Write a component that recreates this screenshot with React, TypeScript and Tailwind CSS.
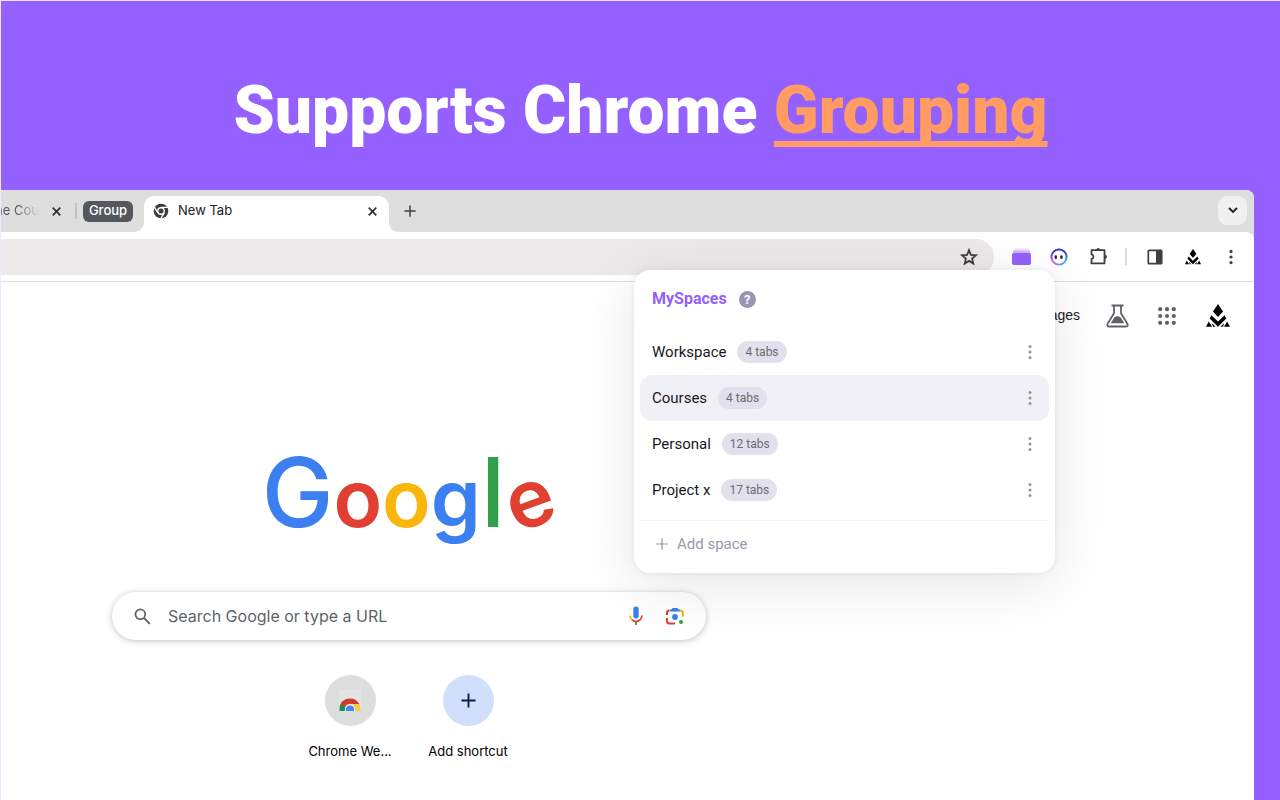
import { ReactNode } from 'react';
import clsx from 'clsx';

const spaces = [
    { name: 'Workspace', tabs: 4 },
    { name: 'Courses', tabs: 4, active: true },
    { name: 'Personal', tabs: 12 },
    { name: 'Project x', tabs: 17 },
];

function CloseIcon() {
    return (
        <svg width="9" height="9" viewBox="0 0 9 9" fill="none" stroke="#2f3133" strokeWidth="1.7">
            <path d="M.7.7l7.6 7.6M8.3.7L.7 8.3" />
        </svg>
    );
}

function ChromeIcon() {
    return (
        <svg width="16" height="16" viewBox="0 0 16 16">
            <circle cx="8" cy="8" r="7.3" fill="#3a3d40" />
            <circle cx="8" cy="8" r="3.9" fill="#fff" />
            <g stroke="#fff" strokeWidth="1.3">
                <path d="M8 4.3h7.5" />
                <path d="M11.2 9.85L7.4 16.3" />
                <path d="M4.8 9.85L1 3.4" />
            </g>
            <circle cx="8" cy="8" r="2.5" fill="#3a3d40" />
        </svg>
    );
}

function ProfileLogo({ size }: { size: number }) {
    return (
        <svg width={size} height={size} viewBox="0 0 24 24" fill="#000">
            <path d="M12 0l5 7.6-5 5.4-5-5.4z" />
            <path d="M5.4 11.2L12 17.6l6.6-6.4 1.7 3.4L12 22.8l-8.3-8.2z" />
            <path d="M2.8 17.4L6 22.8H0z" />
            <path d="M21.2 17.4L24 22.8h-6z" />
            <path d="M5.8 19l3.8 3.8H7zM18.2 19l-3.8 3.8H17z" />
        </svg>
    );
}

function DotsIcon({ color, r }: { color: string; r: number }) {
    return (
        <svg width="4" height="16" viewBox="0 0 4 16" fill={color}>
            <circle cx="2" cy="2.4" r={r} />
            <circle cx="2" cy="8" r={r} />
            <circle cx="2" cy="13.6" r={r} />
        </svg>
    );
}

function PlusIcon({ size, color, width }: { size: number; color: string; width: number }) {
    return (
        <svg width={size} height={size} viewBox="0 0 16 16" fill="none" stroke={color} strokeWidth={width}>
            <path d="M8 .5v15M.5 8h15" />
        </svg>
    );
}

function TabStrip() {
    return (
        <div className="flex h-[42px] bg-[#dedede] text-[13px] text-[#202124]">
            <div className="flex h-[42px] items-center">
                <span className="flex w-[38px] justify-end overflow-hidden whitespace-nowrap bg-linear-to-r from-[#55585b] from-40% to-[#dedede] bg-clip-text text-transparent">
                    ne Cou
                </span>
                <button aria-label="Close tab" className="ml-[13px]"><CloseIcon /></button>
                <span className="ml-[14px] h-4 w-[2px] bg-[#c1c1c1]" />
                <button className="ml-[6px] h-[21px] w-[50px] rounded-md bg-[#54585c] text-center font-medium text-white">
                    Group
                </button>
            </div>
            {/* active tab with flared bottom corners */}
            <div className="flex items-end pl-px">
                <svg width="10" height="10" viewBox="0 0 10 10" fill="#fff"><path d="M10 0v10H0C6 10 10 6 10 0z" /></svg>
                <div className="flex h-9 w-[245px] items-center rounded-t-[10px] bg-white pr-3 pb-[6px] pl-[9px]">
                    <ChromeIcon />
                    <span className="ml-[9px] flex-1">New Tab</span>
                    <button aria-label="Close tab"><CloseIcon /></button>
                </div>
                <svg width="10" height="10" viewBox="0 0 10 10" fill="#fff"><path d="M0 0v10h10C4 10 0 6 0 0z" /></svg>
            </div>
            <button aria-label="New tab" className="ml-[5px]">
                <PlusIcon size={12} color="#3c4043" width={2} />
            </button>
            <button aria-label="Search tabs" className="mt-[6px] mr-[7px] ml-auto flex size-[29px] items-center justify-center rounded-[9px] bg-[#f0f0f0]">
                <svg width="10" height="7" viewBox="0 0 10 7" fill="none" stroke="#202124" strokeWidth="1.8"><path d="M1 1l4 4 4-4" /></svg>
            </button>
        </div>
    );
}

function ToolButton({ label, className, children }: { label: string; className?: string; children: ReactNode }) {
    return (
        <button aria-label={label} className={clsx('flex shrink-0 items-center justify-center', className)}>
            {children}
        </button>
    );
}

function Toolbar() {
    return (
        <div className="bg-[#dedede]">
            <div className="flex h-[50px] items-center rounded-tr-lg border-b border-[#dfdfdf] bg-white pr-[21px]">
                <div className="flex h-9 flex-1 items-center rounded-r-full bg-[#ede9ea] pr-4">
                    <input aria-label="Address bar" className="min-w-0 flex-1 bg-transparent outline-none" />
                    <ToolButton label="Bookmark">
                        <svg width="18" height="18" viewBox="0 0 18 18" fill="none" stroke="#3c3f42" strokeWidth="1.8">
                            <path d="M9 2.2l1.9 4.7 5 .4-3.8 3.3 1.2 5L9 12.9l-4.3 2.7 1.2-5-3.8-3.3 5-.4z" />
                        </svg>
                    </ToolButton>
                </div>
                <ToolButton label="MySpaces" className="ml-[18px]">
                    <svg width="19" height="18" viewBox="0 0 19 18">
                        <rect x="1.5" y="0.5" width="16" height="8" rx="2" fill="#ece3ff" />
                        <rect x="0.8" y="2.5" width="17.4" height="8" rx="2" fill="#ceb6ff" />
                        <rect x="0" y="5" width="19" height="12" rx="2" fill="#9460fb" />
                    </svg>
                </ToolButton>
                <ToolButton label="Assistant" className="ml-[19px]">
                    <svg width="18" height="18" viewBox="0 0 18 18">
                        <defs>
                            <linearGradient id="ring" x1="0.1" y1="0.8" x2="0.9" y2="0.8">
                                <stop offset="0" stopColor="#d55cf0" />
                                <stop offset="1" stopColor="#2fb5f5" />
                            </linearGradient>
                            <linearGradient id="ringTop" x1="0" y1="0" x2="0" y2="1">
                                <stop offset="0.1" stopColor="#3f35e0" />
                                <stop offset="0.8" stopColor="#3f35e0" stopOpacity="0" />
                            </linearGradient>
                        </defs>
                        <circle cx="9" cy="9" r="7.6" fill="#fff" stroke="url(#ring)" strokeWidth="1.9" />
                        <circle cx="9" cy="9" r="7.6" fill="none" stroke="url(#ringTop)" strokeWidth="1.9" />
                        <rect x="4.7" y="7.2" width="2.2" height="3.8" rx="1.1" fill="#1d1d2b" />
                        <rect x="10.3" y="7.2" width="2.2" height="3.8" rx="1.1" fill="#1d1d2b" />
                    </svg>
                </ToolButton>
                <ToolButton label="Extensions" className="ml-[21px]">
                    <svg width="20" height="20" viewBox="0 0 20 20" fill="none" stroke="#3c3f42" strokeWidth="1.8" strokeLinejoin="round">
                        <path d="M2.5 3.2h13v13.200h-13v-4.200c2.600-.7 2.600-4.100 0-4.800z" />
                        <path d="M7.300 2.800a2 2 0 0 1 3.800 0zM16.200 7.900a2 2 0 0 1 0 3.800z" fill="#3c3f42" strokeWidth="0.8" />
                    </svg>
                </ToolButton>
                <span className="ml-4 h-[17px] w-[2px] bg-[#dcdcdc]" />
                <ToolButton label="Side panel" className="ml-[20px]">
                    <svg width="16" height="16" viewBox="0 0 16 16">
                        <rect x="1.3" y="1.3" width="13.4" height="13.4" rx="0.8" fill="none" stroke="#3c3f42" strokeWidth="1.7" />
                        <path d="M9 1h6v14H9z" fill="#3c3f42" />
                    </svg>
                </ToolButton>
                <ToolButton label="Profile" className="ml-[22px]"><ProfileLogo size={16} /></ToolButton>
                <ToolButton label="Menu" className="ml-7"><DotsIcon color="#3c3f42" r={1.6} /></ToolButton>
            </div>
        </div>
    );
}

function SpacesPopup() {
    return (
        <section className="absolute top-[80px] right-[199px] w-[421px] rounded-2xl bg-white px-[6px] font-['Roboto',sans-serif] text-[15px] text-[#17171f] shadow-[0_12px_60px_rgba(0,0,0,0.10),0_0_6px_rgba(0,0,0,0.08)]">
            <div className="flex h-[58px] items-center pl-3">
                <h2 className="text-[16px] font-bold text-[#9460fb]">MySpaces</h2>
                <button aria-label="Help" className="ml-3 size-[17px] rounded-full bg-[#9896b4] text-center text-[13px] leading-[17px] font-bold text-white">?</button>
            </div>
            <ul className="pt-px">
                {spaces.map((s) => (
                    <li key={s.name} className={clsx('flex h-[46px] items-center rounded-xl pr-[17px] pl-3', s.active && 'bg-[#f1f0f7]')}>
                        <span>{s.name}</span>
                        <span className="ml-[11px] h-[22px] rounded-full bg-[#e1e0ec] px-2 text-[12px] leading-[22px] text-[#6b6b70]">{s.tabs} tabs</span>
                        <button aria-label={`${s.name} options`} className="ml-auto"><DotsIcon color="#9492a8" r={1.5} /></button>
                    </li>
                ))}
            </ul>
            <button className="mt-[7px] flex h-[53px] w-full items-center border-t border-[#f3f3f5] pb-[6px] pl-4 text-[#9a98ae]">
                <PlusIcon size={12} color="#8f8da5" width={1.6} />
                <span className="ml-[9px]">Add space</span>
            </button>
        </section>
    );
}

function TopLinks() {
    return (
        <nav className="flex h-[67px] items-center justify-end pr-6">
            <a href="#images" className="font-['Liberation_Sans',sans-serif] text-[14px] text-[#202124]">Images</a>
            <ToolButton label="Labs" className="ml-[26px]">
                <svg width="23" height="24" viewBox="0 0 23 24" fill="none" stroke="#5f6368" strokeWidth="1.8" strokeLinejoin="round">
                    <path d="M5.500 1.500h12M8 1.500v7.800L1.600 19.800c-.8 1.500 0 2.700 1.500 2.700h16.800c1.500 0 2.300-1.200 1.500-2.700L15 9.300V1.500" />
                    <path d="M4.600 19.300l4-6.300c1.700-1 4-1 5.800 0l4 6.300z" fill="#5f6368" stroke="none" />
                </svg>
            </ToolButton>
            <ToolButton label="Google apps" className="ml-[29px]">
                <svg width="18" height="18" viewBox="0 0 18 18" fill="#5f6368">
                    {[2.2, 9, 15.8].map((y) => [2.2, 9, 15.8].map((x) => <circle key={`${x}-${y}`} cx={x} cy={y} r="2.1" />))}
                </svg>
            </ToolButton>
            <ToolButton label="Account" className="ml-[30px]"><ProfileLogo size={24} /></ToolButton>
        </nav>
    );
}

function SearchBox() {
    return (
        <form className="flex h-12 w-[594px] items-center rounded-full bg-white px-[22px] shadow-[0_1px_6px_rgba(32,33,36,0.28)]">
            <svg width="17" height="17" viewBox="0 0 17 17" fill="none" stroke="#5f6368" strokeWidth="1.8">
                <circle cx="6.3" cy="6.3" r="4.9" />
                <path d="M10 10l5.8 5.8" />
            </svg>
            <input
                aria-label="Search"
                placeholder="Search Google or type a URL"
                className="ml-[17px] min-w-0 flex-1 bg-transparent text-[16px] text-[#5f6368] outline-none placeholder:text-[#5f6368]"
            />
            <ToolButton label="Voice search">
                <svg width="14" height="20" viewBox="0 0 14 20" fill="none" strokeWidth="1.8">
                    <rect x="4.3" y="0.5" width="5.4" height="12" rx="2.7" fill="#3b7ff0" />
                    <path d="M1.1 9.500c0 2 .8 3.400 1.900 4.400" stroke="#f5b912" />
                    <path d="M3 13.900c2.400 2 5.600 2 8 0 1.200-1 1.900-2.400 1.900-4.400" stroke="#e23f33" />
                    <path d="M7 15.700V19" stroke="#31a04c" />
                </svg>
            </ToolButton>
            <ToolButton label="Search by image" className="ml-[23px]">
                <svg width="18" height="18" viewBox="0 0 18 18" fill="none" strokeWidth="2">
                    <path d="M1 8V6c0-1.500 1-2.500 2.500-2.500" stroke="#e23f33" />
                    <path d="M4 3.500h10" stroke="#3b7ff0" />
                    <path d="M6.500 1h5l1.500 2.500H5z" fill="#3b7ff0" />
                    <path d="M14 3.500c2 0 3 1 3 2.500v3.500" stroke="#f5b912" />
                    <path d="M1 11v3c0 1.500 1 2.500 2.500 2.500H9" stroke="#e23f33" />
                    <circle cx="9" cy="10" r="2.9" fill="#3b7ff0" />
                    <circle cx="15" cy="15" r="2" fill="#31a04c" />
                </svg>
            </ToolButton>
        </form>
    );
}

function Shortcuts() {
    return (
        <div className="mt-[35px] flex text-center text-[13px] text-black">
            <a href="#store" className="w-[118px]">
                <span className="mx-auto flex size-[51px] items-center justify-center rounded-full bg-[#dcdedc]">
                    <svg width="24" height="24" viewBox="0 0 24 24">
                        <rect x="1" y="1" width="22" height="21" rx="1" fill="#e4e4e4" />
                        <path d="M1.500 22v-2.500a10.500 10.500 0 0 1 4-8L12 22z" fill="#1f8e46" />
                        <path d="M2.800 15a10.500 10.500 0 0 1 18.400 0H12v6z" fill="#d03b30" />
                        <path d="M12 15h9.200a10.500 10.500 0 0 1 1.300 4.500V22H12z" fill="#fbc93d" />
                        <path d="M6.800 22v-2a5.200 5.200 0 0 1 10.400 0v2z" fill="#e8e8e8" />
                        <path d="M8 22v-1.500a4 4 0 0 1 8 0V22z" fill="#4285f4" />
                    </svg>
                </span>
                <span className="mt-4 block">Chrome We...</span>
            </a>
            <button className="w-[118px]">
                <span className="mx-auto flex size-[51px] items-center justify-center rounded-full bg-[#cfdffc]">
                    <PlusIcon size={15} color="#0b1d3f" width={2} />
                </span>
                <span className="mt-4 block">Add shortcut</span>
            </button>
        </div>
    );
}

export default function App() {
    return (
        <div className="flex min-h-screen flex-col border-t border-l border-[#efe7ff] bg-[#9460ff] font-['Inter',sans-serif]">
            <h1 className="flex h-[189px] items-center justify-center pt-[30px] font-['Roboto',sans-serif] text-[66px] leading-[76px] font-black text-white">
                <span>Supports Chrome <span className="text-[#ff9b63] underline decoration-[6px] underline-offset-[8px] [text-decoration-skip-ink:none]">Grouping</span></span>
            </h1>
            <div className="relative mr-[26px] flex-1 rounded-tr-lg bg-white">
                <div className="overflow-hidden rounded-tr-lg">
                    <TabStrip />
                    <Toolbar />
                </div>
                <TopLinks />
                <main className="flex flex-col items-center pr-[437px]">
                    <div className="mt-[85px] h-[158px] pr-1 text-[80px] leading-[116px] font-semibold">
                        <span className="text-[96px] font-medium text-[#3b7ff0]">G</span>
                        <span className="text-[#e23f33]">o</span>
                        <span className="text-[#fab60c]">o</span>
                        <span className="text-[#3b7ff0]">g</span>
                        <span className="text-[96px] font-medium text-[#31a04c]">l</span>
                        <span className="inline-block -rotate-20 leading-none text-[#e23f33]">e</span>
                    </div>
                    <SearchBox />
                    <Shortcuts />
                </main>
                <SpacesPopup />
            </div>
        </div>
    );
}
